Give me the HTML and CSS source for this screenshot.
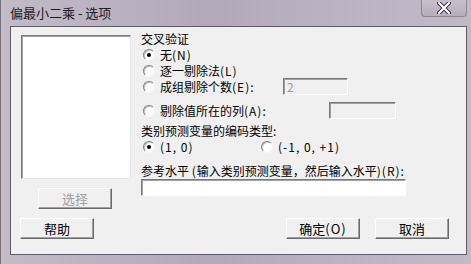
FILE: index.html
```html
<!DOCTYPE html>
<html lang="zh-CN">
<head>
    <meta charset="UTF-8">
    <title>偏最小二乘 - 选项</title>
    <link rel="stylesheet" href="styles.css">
</head>
<body>

<div class="frame">
    <div class="titlebar">
        <span class="title">偏最小二乘 - 选项</span>
        <div class="close-btn">
            <svg width="14" height="12" viewBox="0 0 14 12">
                <path d="M2 1 L12 11 M12 1 L2 11" stroke="#3a3540" stroke-width="4" stroke-linecap="round"/>
                <path d="M2 1 L12 11 M12 1 L2 11" stroke="#ffffff" stroke-width="2" stroke-linecap="round"/>
            </svg>
        </div>
    </div>

    <div class="client">
        <div class="main">
            <!-- left column: variable list -->
            <div class="left-col">
                <div class="listbox"></div>
                <div class="btn btn-select disabled">选择</div>
            </div>

            <!-- right column: options -->
            <div class="right-col">
                <div class="heading">交叉验证</div>
                <div class="radio-row r-none">
                    <span class="radio checked"></span>
                    <span>无<span class="lat">(N)</span></span>
                </div>
                <div class="radio-row r-loo">
                    <span class="radio"></span>
                    <span>逐一剔除法<span class="lat">(L)</span></span>
                </div>
                <div class="radio-row r-group">
                    <span class="radio"></span>
                    <span class="grow">成组剔除个数<span class="lat">(E):</span></span>
                    <div class="field field-disabled field-group">2</div>
                </div>
                <div class="radio-row r-col">
                    <span class="radio"></span>
                    <span class="grow">剔除值所在的列<span class="lat">(A):</span></span>
                    <div class="field field-disabled field-col"></div>
                </div>
                <div class="heading h-coding">类别预测变量的编码类型:</div>
                <div class="coding-row">
                    <div class="radio-row coding-a">
                        <span class="radio checked"></span>
                        <span class="lat">(1, 0)</span>
                    </div>
                    <div class="radio-row">
                        <span class="radio"></span>
                        <span class="lat">(-1, 0, +1)</span>
                    </div>
                </div>
                <div class="heading h-ref">参考水平 <span class="lat">(</span>输入类别预测变量，然后输入水平<span class="lat">)(R):</span></div>
                <div class="field field-ref"></div>
            </div>
        </div>

        <div class="footer">
            <div class="btn btn-help">帮助</div>
            <div class="footer-right">
                <div class="btn">确定<span class="lat">(O)</span></div>
                <div class="btn">取消</div>
            </div>
        </div>
    </div>
</div>

</body>
</html>
```

FILE: styles.css
```css
/* Base */
* {
    box-sizing: border-box;
    margin: 0;
    padding: 0;
}
body {
    width: 471px;
    height: 264px;
    overflow: hidden;
    font-family: "Noto Sans CJK SC", "Liberation Sans", sans-serif;
    font-size: 12px;
    color: #000;
    background: linear-gradient(90deg, #c3bbc8 0%, #b3a9b9 45%, #bdb4c3 75%, #c2b9c7 100%);
}
.lat {
    letter-spacing: 1px;
}

/* Window frame */
.frame {
    height: 100%;
    padding: 0 4px 0 9px;
    border-left: 1px solid #77707a;
    display: flex;
    flex-direction: column;
}

/* Title bar */
.titlebar {
    height: 26px;
    display: flex;
    justify-content: space-between;
    align-items: flex-start;
}
.title {
    font-size: 13px;
    line-height: 26px;
    color: #1c1a1e;
}
.close-btn {
    width: 46px;
    height: 17px;
    border: 1px solid #8d8494;
    border-top: none;
    border-radius: 0 0 4px 4px;
    background: linear-gradient(#c6bfcb, #b6adbc);
    display: flex;
    justify-content: center;
    align-items: center;
}

/* Client area */
.client {
    height: 229px;
    background-color: #f0f0f0;
    border: 1px solid #5f5a63;
    display: flex;
    flex-direction: column;
}
.main {
    display: flex;
    padding-top: 5px;
}

/* Left column */
.left-col {
    width: 130px;
    padding: 3px 0 0 10px;
    display: flex;
    flex-direction: column;
}
.listbox {
    width: 110px;
    height: 144px;
    background-color: #fff;
    border: 1px solid;
    border-color: #7a7a7a #e6e6e6 #e6e6e6 #7a7a7a;
    box-shadow: inset 1px 1px 0 #a0a0a0;
}
.btn-select {
    margin: 9px 0 0 17px;
}

/* Right column */
.right-col {
    flex: 1;
}
.heading {
    height: 14px;
    line-height: 14px;
}
.radio-row {
    display: flex;
    align-items: center;
    height: 14px;
    line-height: 14px;
}
.radio-row .radio {
    margin: 0 5px 0 2px;
}
.r-none { margin-top: 2px; }
.r-loo { margin-top: 2px; }
.r-group { height: 17px; }
.r-col { margin-top: 7px; height: 17px; }
.grow { flex: 0 0 124px; }
.h-coding { margin-top: 5px; }
.coding-row {
    display: flex;
    margin-top: 2px;
}
.coding-a { width: 118px; }
.h-ref { margin-top: 10px; }

/* Radio buttons */
.radio {
    width: 12px;
    height: 12px;
    border-radius: 50%;
    border: 1px solid;
    border-color: #7e7e7e #f4f4f4 #f4f4f4 #7e7e7e;
    background-color: #fff;
    box-shadow: inset 1px 1px 0 #c8c8c8;
    display: inline-flex;
    justify-content: center;
    align-items: center;
    flex-shrink: 0;
}
.radio.checked::after {
    content: "";
    width: 4px;
    height: 4px;
    border-radius: 50%;
    background-color: #000;
}

/* Text fields */
.field {
    height: 17px;
    border: 1px solid;
    border-color: #7a7a7a #fff #fff #7a7a7a;
    box-shadow: inset 1px 1px 0 #a0a0a0;
    line-height: 15px;
    padding-left: 3px;
}
.field-disabled {
    background-color: #f0f0f0;
    color: #9a9a9a;
}
.field-group { width: 65px; margin-left: -1px; }
.field-col { width: 67px; margin-left: 45px; }
.field-ref {
    width: 265px;
    margin-top: 1px;
    background-color: #fff;
}

/* Buttons */
.btn {
    width: 74px;
    height: 21px;
    line-height: 19px;
    text-align: center;
    background-color: #f0f0f0;
    border: 1px solid;
    border-color: #fff #6a6a6a #6a6a6a #fff;
    box-shadow: inset -1px -1px 0 #a0a0a0;
    font-size: 13px;
}
.btn.disabled {
    color: #a0a0a0;
}

/* Footer */
.footer {
    display: flex;
    justify-content: space-between;
    padding: 9px 17px 0 9px;
}
.footer-right {
    display: flex;
    gap: 15px;
}
```
